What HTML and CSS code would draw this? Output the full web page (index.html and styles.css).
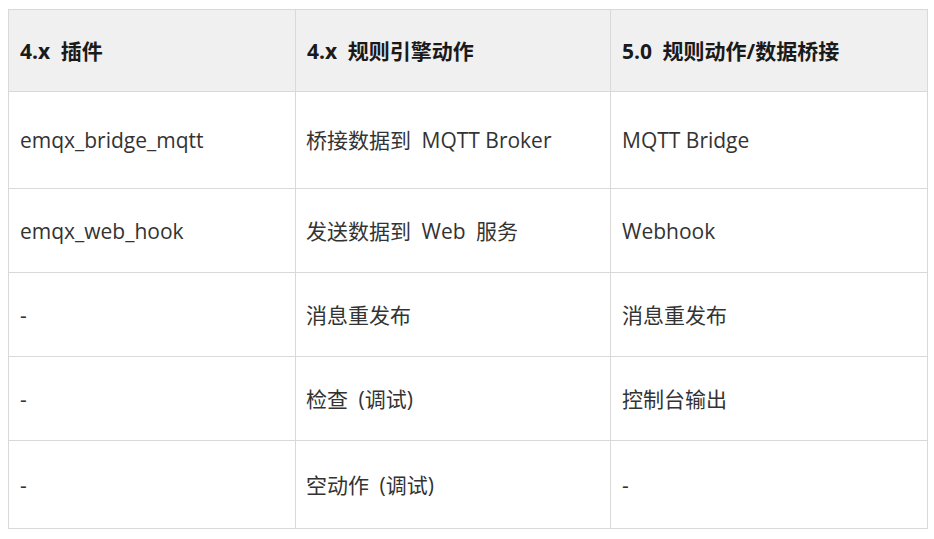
FILE: index.html
```html
<!DOCTYPE html>
<html lang="zh-CN">
<head>
<meta charset="utf-8">
<link rel="stylesheet" href="styles.css">
</head>
<body>
<table class="map">
  <colgroup>
    <col class="c1"><col class="c2"><col class="c3">
  </colgroup>
  <thead>
    <tr class="h"><th>4.x&ensp;插件</th><th>4.x&ensp;规则引擎动作</th><th>5.0&ensp;规则动作/数据桥接</th></tr>
  </thead>
  <tbody>
    <tr class="r1"><td>emqx_bridge_mqtt</td><td>桥接数据到&ensp;MQTT Broker</td><td>MQTT Bridge</td></tr>
    <tr class="r2"><td>emqx_web_hook</td><td>发送数据到&ensp;Web&ensp;服务</td><td>Webhook</td></tr>
    <tr class="r3"><td>-</td><td>消息重发布</td><td>消息重发布</td></tr>
    <tr class="r4"><td>-</td><td>检查&ensp;(调试)</td><td>控制台输出</td></tr>
    <tr class="r5"><td>-</td><td>空动作&ensp;(调试)</td><td>-</td></tr>
  </tbody>
</table>
</body>
</html>
```
FILE: styles.css
```css
html, body { background: #fff; }
body {
  margin: 0;
  padding: 9px 0 0 8px;
  font-family: "Open Sans", "Noto Sans CJK SC", sans-serif;
  font-size: 21px;
  color: #333;
}
.map {
  border-collapse: collapse;
  width: 919px;
  table-layout: fixed;
}
.c1 { width: 287px; }
.c2 { width: 315px; }
.c3 { width: 317px; }
.map th, .map td {
  border: 1px solid #d9d9d9;
  padding: 0 11px 0 11px;
  text-align: left;
  vertical-align: middle;
  line-height: 28px;
}
.map td:nth-child(2) { padding-left: 10px; }
.map th {
  background: #f0f0f0;
  font-weight: 700;
  color: #1a1a1a;
}
.h { height: 82px; }
.r1 { height: 97px; }
.r2, .r3, .r4 { height: 84px; }
.r5 { height: 88px; }
```
